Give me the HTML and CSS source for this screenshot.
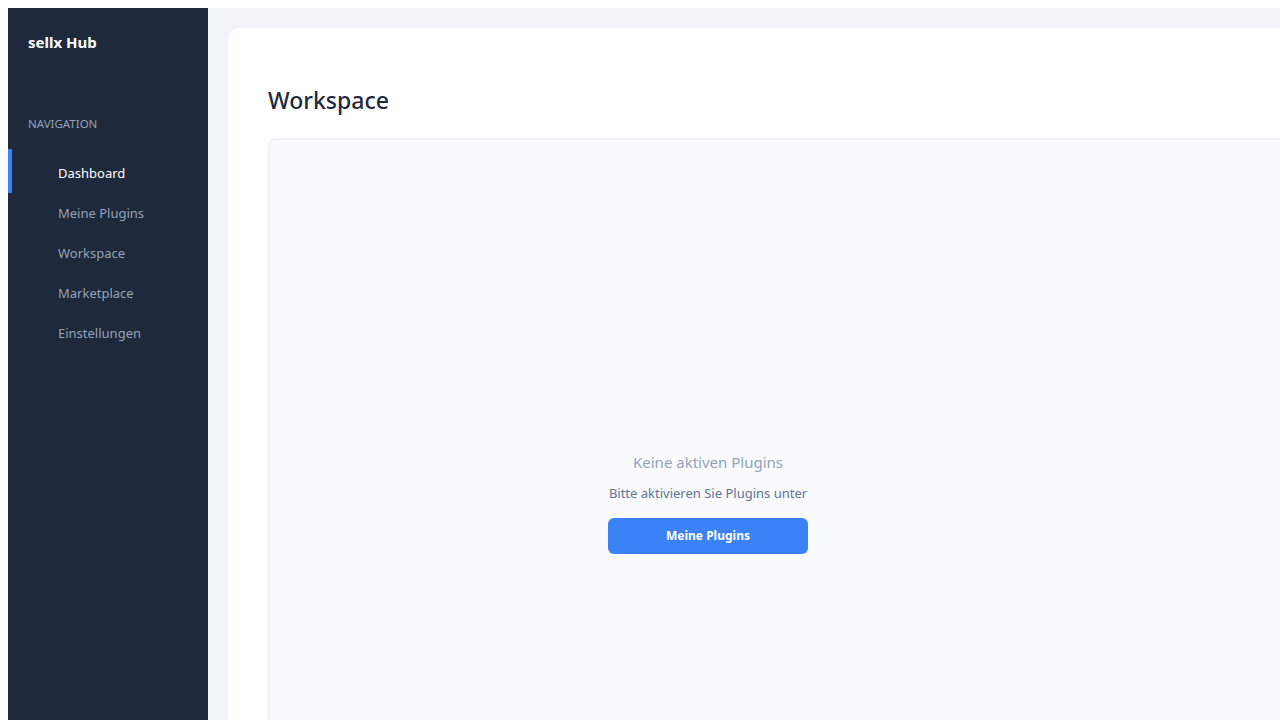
FILE: index.html
```html
<!DOCTYPE html>
<html lang="de">
<head>
    <meta charset="UTF-8">
    <meta name="viewport" content="width=device-width, initial-scale=1.0">
    <title>sellx Hub - Workspace</title>
    <link rel="stylesheet" href="styles.css">
</head>
<body>
    <div class="app">
        <!-- Sidebar -->
        <aside class="sidebar">
            <div class="brand">sellx Hub</div>
            <div class="nav-label">Navigation</div>
            <nav class="nav">
                <a href="javascript:void(0)" class="nav-item active">Dashboard</a>
                <a href="javascript:void(0)" class="nav-item">Meine Plugins</a>
                <a href="javascript:void(0)" class="nav-item">Workspace</a>
                <a href="javascript:void(0)" class="nav-item">Marketplace</a>
                <a href="javascript:void(0)" class="nav-item">Einstellungen</a>
            </nav>
        </aside>

        <!-- Main Content -->
        <main class="main">
            <section class="card">
                <h1 class="page-title">Workspace</h1>
                <div class="workspace-box">
                    <div class="empty-state">
                        <p class="empty-title">Keine aktiven Plugins</p>
                        <p class="empty-text">Bitte aktivieren Sie Plugins unter</p>
                        <button class="btn-primary">Meine Plugins</button>
                    </div>
                </div>
            </section>
        </main>
    </div>
</body>
</html>
```

FILE: styles.css
```css
/* General Styles */
body {
    font-family: "Noto Sans", "Open Sans", sans-serif;
    margin: 8px 0 0 8px;
    background-color: #ffffff;
    color: #1e293b;
    overflow: hidden;
}

.app {
    display: flex;
    height: 712px;
}

/* Sidebar */
.sidebar {
    flex: none;
    width: 200px;
    background-color: #1e293b;
    padding: 20px 0;
    box-sizing: border-box;
}

.brand {
    color: #ffffff;
    font-size: 15px;
    font-weight: bold;
    padding: 0 20px;
    line-height: 28px;
}

.nav-label {
    color: #94a3b8;
    font-size: 11.5px;
    text-transform: uppercase;
    padding: 0 20px;
    margin-top: 60px;
    line-height: 16px;
}

.nav {
    display: flex;
    flex-direction: column;
    margin-top: 21px;
}

.nav-item {
    position: relative;
    display: block;
    height: 40px;
    line-height: 40px;
    padding-left: 50px;
    color: #94a3b8;
    font-size: 13px;
    text-decoration: none;
}

.nav-item:hover {
    color: #ffffff;
}

.nav-item.active {
    color: #ffffff;
}

.nav-item.active::before {
    content: "";
    position: absolute;
    left: 0;
    top: -4px;
    bottom: 0;
    width: 4px;
    background-color: #3b82f6;
}

/* Main */
.main {
    flex: 1;
    min-width: 0;
    overflow: hidden;
    background-color: #f1f5f9;
    padding: 20px 0 0 20px;
}

.card {
    width: 1200px;
    background-color: #ffffff;
    border-radius: 12px 0 0 0;
    padding: 40px 0 40px 40px;
    min-height: 800px;
}

.page-title {
    font-size: 23px;
    font-weight: 500;
    line-height: 32px;
    margin: 16px 0 22px;
    color: #1e293b;
}

.workspace-box {
    background-color: #f8fafc;
    border: 2px solid #eef2f6;
    border-right: none;
    border-radius: 8px 0 0 8px;
    height: 726px;
    display: flex;
    align-items: center;
}

.empty-state {
    width: 876px;
    text-align: center;
    padding-bottom: 2px;
}

.empty-title {
    color: #94a3b8;
    font-size: 15px;
    margin: 0 0 10px;
    line-height: 22px;
}

.empty-text {
    color: #64748b;
    font-size: 13px;
    margin: 0 0 15px;
    line-height: 20px;
}

.btn-primary {
    width: 200px;
    height: 36px;
    border: none;
    border-radius: 6px;
    background-color: #3b82f6;
    color: #ffffff;
    font-family: inherit;
    font-size: 12px;
    font-weight: bold;
    cursor: pointer;
}
```
